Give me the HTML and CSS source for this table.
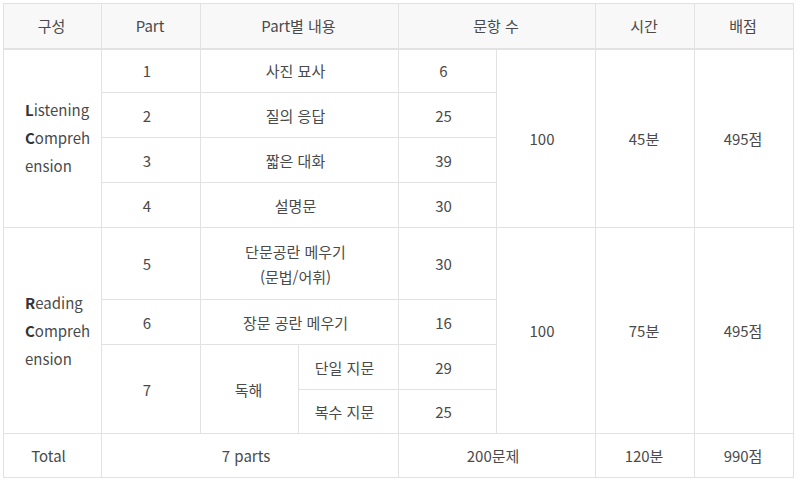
FILE: index.html
```html
<!DOCTYPE html>
<html lang="ko">
<head>
<meta charset="utf-8">
<link rel="stylesheet" href="styles.css">
</head>
<body>
<div class="wrap">
<table class="toeic">
  <colgroup>
    <col class="c1"><col class="c2"><col class="c3"><col class="c4"><col class="c5"><col class="c6"><col class="c7"><col class="c8">
  </colgroup>
  <thead>
    <tr class="h45">
      <th>구성</th><th>Part</th><th colspan="2">Part별 내용</th><th colspan="2">문항 수</th><th>시간</th><th>배점</th>
    </tr>
  </thead>
  <tbody>
    <tr class="h44">
      <td rowspan="4" class="sec"><b>L</b>istening <b>C</b>omprehension</td>
      <td>1</td><td colspan="2">사진 묘사</td><td>6</td>
      <td rowspan="4">100</td><td rowspan="4" class="mid">45분</td><td rowspan="4" class="mid">495점</td>
    </tr>
    <tr class="h45"><td>2</td><td colspan="2">질의 응답</td><td>25</td></tr>
    <tr class="h45"><td>3</td><td colspan="2">짧은 대화</td><td>39</td></tr>
    <tr class="h45"><td>4</td><td colspan="2">설명문</td><td>30</td></tr>
    <tr class="h72">
      <td rowspan="4" class="sec"><b>R</b>eading <b>C</b>omprehension</td>
      <td>5</td><td colspan="2">단문공란 메우기<br>(문법/어휘)</td><td>30</td>
      <td rowspan="4">100</td><td rowspan="4" class="mid">75분</td><td rowspan="4" class="mid">495점</td>
    </tr>
    <tr class="h45"><td>6</td><td colspan="2">장문 공란 메우기</td><td>16</td></tr>
    <tr class="h45"><td rowspan="2">7</td><td rowspan="2" class="mid">독해</td><td>단일 지문</td><td>29</td></tr>
    <tr class="h44"><td>복수 지문</td><td>25</td></tr>
    <tr class="h44 total">
      <td>Total</td><td colspan="3">7 parts</td><td colspan="2">200문제</td><td class="mid">120분</td><td class="mid">990점</td>
    </tr>
  </tbody>
</table>
</div>
</body>
</html>
```

FILE: styles.css
```css
html, body {
  margin: 0;
  padding: 0;
  background: #ffffff;
}
.wrap {
  padding: 3px 0 0 3px;
}
.toeic {
  border-collapse: collapse;
  table-layout: fixed;
  width: 791px;
  font-family: "Noto Sans CJK KR", "Noto Sans", sans-serif;
  font-size: 15px;
  color: #4a4a4a;
  line-height: 25px;
}
.c1 { width: 98px; }
.c2 { width: 99px; }
.c3 { width: 98px; }
.c4 { width: 100px; }
.c5 { width: 98px; }
.c6 { width: 99px; }
.c7 { width: 99px; }
.c8 { width: 99px; }
.toeic th,
.toeic td {
  border: 1px solid #e2e2e2;
  text-align: center;
  vertical-align: middle;
  font-weight: 400;
}
.toeic th {
  padding: 0 5px 0 3px;
}
.toeic td {
  padding: 0 12px 0 4px;
}
.toeic td.mid {
  padding: 0 6px 0 4px;
}
.toeic thead th {
  background: #f8f8f8;
  border-bottom: 2px solid #e2e2e2;
}
.h45 { height: 45px; }
.h44 { height: 44px; }
.h72 { height: 72px; }
.toeic td.sec {
  text-align: left;
  padding: 0 7px 0 21px;
  line-height: 28px;
  overflow-wrap: anywhere;
}
.sec b {
  font-weight: 700;
  color: #333333;
}
```
